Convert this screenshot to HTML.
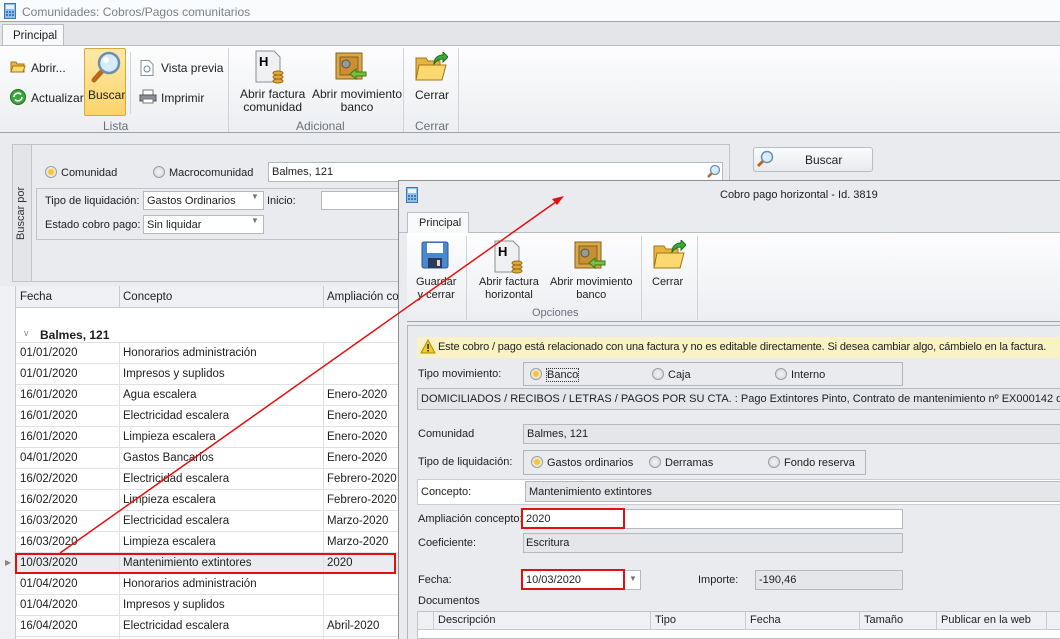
<!DOCTYPE html>
<html><head><meta charset="utf-8"><style>
*{margin:0;padding:0;box-sizing:border-box}
body{width:1060px;height:639px;overflow:hidden;background:#e9ebef;font-family:"Liberation Sans",sans-serif;font-size:11.5px;color:#1e1e1e;position:relative}
.a{position:absolute;white-space:nowrap}
.s{font-size:11px}
.box{position:absolute;border:1px solid #b4b8bf;background:#e4e6ea;white-space:nowrap;overflow:hidden;font-size:11px}
.wbox{position:absolute;border:1px solid #b4b8bf;background:#fff;white-space:nowrap;overflow:hidden;font-size:11px}
.rad{display:inline-block;width:12px;height:12px;border-radius:50%;border:1px solid #9a9ea5;background:radial-gradient(#f4f4f4,#d0d2d6);vertical-align:-2px;margin-right:4px}
.rad.on{background:radial-gradient(#f9c23c 35%,#f6e0a8 45%,#eee 70%)}
.sep{position:absolute;width:1px;background:#cfd3da}
.row{position:absolute;left:0;width:398px;height:21px;border-bottom:1px solid #dfe1e5;background:#fff}
.row span{position:absolute;top:4px}
.gl{position:absolute;top:0;bottom:0;width:1px;background:#dfe1e5}
</style></head><body>
<div class="a" style="left:0;top:0;width:1060px;height:22px;background:#fafbfc;border-bottom:1px solid #a0a4aa"></div>
<svg class="a" style="left:4px;top:3px" width="12" height="16"><rect x=".5" y=".5" width="11" height="15" fill="#8ec0ea" stroke="#3a78b8"/><rect x="2" y="2" width="8" height="4" fill="#e8f4ff"/><g fill="#3a78b8"><rect x="2" y="8" width="2" height="2"/><rect x="5" y="8" width="2" height="2"/><rect x="8" y="8" width="2" height="2"/><rect x="2" y="11" width="2" height="2"/><rect x="5" y="11" width="2" height="2"/><rect x="8" y="11" width="2" height="2"/></g></svg>
<div class="a" style="left:22px;top:5px;color:#7a7f88;font-size:12px">Comunidades: Cobros/Pagos comunitarios</div>
<div class="a" style="left:0;top:22px;width:1060px;height:23px;background:#e3e5e9"></div>
<div class="a" style="left:2px;top:24px;width:62px;height:22px;background:#f8f9fa;border:1px solid #b8bcc3;border-bottom:none;padding:5px 0 0 10px">Principal</div>
<div class="a" style="left:0;top:45px;width:1060px;height:88px;background:linear-gradient(#fdfdfe,#eceef1);border-top:1px solid #b8bcc3;border-bottom:1px solid #9ea3aa"></div>
<svg class="a" style="left:10px;top:59px" width="16" height="14"><path d="M1 3h5l1 2h7v8H1z" fill="#e8b440" stroke="#a67414"/><path d="M3 7h12l-2 6H1z" fill="#fbd870" stroke="#a67414"/></svg>
<div class="a" style="left:31px;top:61px;font-size:12px">Abrir...</div>
<svg class="a" style="left:10px;top:89px" width="16" height="16"><circle cx="8" cy="8" r="7.5" fill="#3aa83a" stroke="#1d6e1d"/><path d="M4 8a4 4 0 0 1 7-2.5M12 8a4 4 0 0 1-7 2.5" stroke="#fff" stroke-width="1.6" fill="none"/></svg>
<div class="a" style="left:31px;top:91px;font-size:12px">Actualizar</div>
<div class="a" style="left:84px;top:48px;width:42px;height:68px;background:linear-gradient(#fde9a8,#fbd46a);border:1px solid #d8a93a;border-radius:2px"></div>
<svg class="a" style="left:88px;top:50px" width="34" height="34"><line x1="6" y1="30" x2="15" y2="20" stroke="#c0661c" stroke-width="5" stroke-linecap="round"/><circle cx="21" cy="13" r="10" fill="#d6ecfa" stroke="#6c8fb0" stroke-width="2.5"/><circle cx="18" cy="10" r="3" fill="#fff"/></svg>
<div class="a" style="left:88px;top:88px;font-size:12px">Buscar</div>
<div class="sep" style="left:130px;top:52px;height:62px"></div>
<svg class="a" style="left:140px;top:60px" width="14" height="16"><path d="M1 .5h8l4 4v11H1z" fill="#fff" stroke="#8a8f96"/><circle cx="7" cy="9" r="3" fill="none" stroke="#6b86a4"/></svg>
<div class="a" style="left:161px;top:61px;font-size:12px">Vista previa</div>
<svg class="a" style="left:139px;top:89px" width="18" height="15"><rect x="4" y="1" width="10" height="5" fill="#fff" stroke="#777"/><rect x="1" y="6" width="16" height="6" fill="#8a9099" stroke="#555"/><rect x="4" y="10" width="10" height="4" fill="#fff" stroke="#777"/></svg>
<div class="a" style="left:161px;top:91px;font-size:12px">Imprimir</div>
<div class="a" style="left:103px;top:119px;color:#6b707a;font-size:12px">Lista</div>
<div class="sep" style="left:228px;top:48px;height:84px"></div>
<svg class="a" style="left:255px;top:50px" width="30" height="34"><path d="M1 1h18l6 6v25H1z" fill="#eef0f2" stroke="#8a8f96"/><text x="4" y="16" font-family="Liberation Sans" font-weight="bold" font-size="13">H</text><g fill="#e0a838" stroke="#9a6a10"><ellipse cx="23" cy="31" rx="5" ry="2"/><ellipse cx="23" cy="27" rx="5" ry="2"/><ellipse cx="23" cy="23" rx="5" ry="2"/></g></svg>
<div class="a" style="left:240px;top:88px;font-size:12px;text-align:center;line-height:13px">Abrir factura<br>comunidad</div>
<svg class="a" style="left:334px;top:50px" width="34" height="34"><rect x="2" y="3" width="26" height="26" fill="#d8a84a" stroke="#8a6018"/><rect x="6" y="7" width="18" height="18" fill="#c89030" stroke="#8a6018"/><circle cx="12" cy="14" r="4" fill="#999" stroke="#555"/><path d="M16 24l6-5v3h10v4H22v3z" fill="#78c040" stroke="#3a7a18"/></svg>
<div class="a" style="left:312px;top:88px;font-size:12px;text-align:center;line-height:13px">Abrir movimiento<br>banco</div>
<div class="a" style="left:296px;top:119px;color:#6b707a;font-size:12px">Adicional</div>
<div class="sep" style="left:403px;top:48px;height:84px"></div>
<svg class="a" style="left:414px;top:52px" width="34" height="30"><path d="M2 6h10l2 3h12v19H2z" fill="#e8b440" stroke="#a67414"/><path d="M5 13h27l-4 15H2z" fill="#fbd870" stroke="#a67414"/><path d="M20 12c0-6 4-9 9-9V0l5 5-5 5V7c-4 0-7 2-9 5z" fill="#3aaa3a" stroke="#1d6e1d"/></svg>
<div class="a" style="left:415px;top:88px;font-size:12px">Cerrar</div>
<div class="a" style="left:415px;top:119px;color:#6b707a;font-size:12px">Cerrar</div>
<div class="sep" style="left:458px;top:48px;height:84px"></div>
<!-- search panel -->
<div class="a" style="left:12px;top:144px;width:718px;height:138px;border:1px solid #c0c4ca;background:#e9ebef"></div>
<div class="a" style="left:12px;top:144px;width:20px;height:138px;border:1px solid #c0c4ca;background:#e3e5e9"></div>
<div class="a s" style="left:15px;top:240px;transform:rotate(-90deg);transform-origin:0 0;color:#333">Buscar por</div>
<div class="a s" style="left:45px;top:166px"><span class="rad on"></span>Comunidad</div>
<div class="a s" style="left:153px;top:166px"><span class="rad"></span>Macrocomunidad</div>
<div class="wbox" style="left:268px;top:162px;width:455px;height:20px;padding:3px 3px">Balmes, 121</div>
<svg class="a" style="left:706px;top:164px" width="15" height="15"><line x1="2" y1="13" x2="6" y2="9" stroke="#c0661c" stroke-width="2.5"/><circle cx="9" cy="6" r="4.5" fill="#d6ecfa" stroke="#6c8fb0" stroke-width="1.3"/></svg>
<div class="a" style="left:36px;top:188px;width:380px;height:52px;border:1px solid #c0c4ca"></div>
<div class="a s" style="left:45px;top:195px">Tipo de liquidación:</div>
<div class="wbox" style="left:143px;top:191px;width:121px;height:19px;padding:3px 3px">Gastos Ordinarios</div>
<div class="a" style="left:251px;top:192px;color:#777;font-size:8px">▼</div>
<div class="a s" style="left:267px;top:195px">Inicio:</div>
<div class="wbox" style="left:321px;top:191px;width:90px;height:19px"></div>
<div class="a s" style="left:45px;top:219px">Estado cobro pago:</div>
<div class="wbox" style="left:143px;top:215px;width:121px;height:19px;padding:3px 3px">Sin liquidar</div>
<div class="a" style="left:251px;top:216px;color:#777;font-size:8px">▼</div>
<div class="a" style="left:753px;top:147px;width:120px;height:25px;border:1px solid #b8bcc3;border-radius:3px;background:linear-gradient(#fafbfc,#e8eaed)"></div>
<svg class="a" style="left:756px;top:150px" width="18" height="18"><line x1="2" y1="16" x2="7" y2="11" stroke="#c0661c" stroke-width="3"/><circle cx="11" cy="7" r="5.5" fill="#d6ecfa" stroke="#6c8fb0" stroke-width="1.5"/></svg>
<div class="a" style="left:805px;top:153px;font-size:12px">Buscar</div>
<!-- grid -->
<div class="a" style="left:0;top:286px;width:400px;height:353px;background:#fff;border-top:1px solid #c0c4ca"></div>
<div class="a" style="left:0;top:286px;width:400px;height:22px;background:#eef0f3;border-bottom:1px solid #c8ccd2"></div>
<div class="a" style="left:0;top:286px;width:16px;height:353px;background:#eef0f3;border-right:1px solid #c8ccd2"></div>
<div class="a" style="left:20px;top:291px">Fecha</div>
<div class="a" style="left:123px;top:291px">Concepto</div>
<div class="a" style="left:327px;top:291px">Ampliación con</div>
<div class="a" style="left:119px;top:286px;width:1px;height:22px;background:#c8ccd2"></div>
<div class="a" style="left:323px;top:286px;width:1px;height:22px;background:#c8ccd2"></div>
<div class="a" style="left:16px;top:308px;width:384px;height:35px;background:#fff;border-bottom:1px solid #dfe1e5"></div>
<div class="a" style="left:24px;top:328px;color:#888;font-size:9px">v</div>
<div class="a" style="left:40px;top:328px;font-weight:bold;font-size:12px">Balmes, 121</div>
<div class="a" style="left:16px;top:343px;width:384px;height:296px">
<div class="row" style="top:0"><span style="left:4px">01/01/2020</span><span style="left:107px">Honorarios administración</span></div>
<div class="row" style="top:21px"><span style="left:4px">01/01/2020</span><span style="left:107px">Impresos y suplidos</span></div>
<div class="row" style="top:42px"><span style="left:4px">16/01/2020</span><span style="left:107px">Agua escalera</span><span style="left:311px">Enero-2020</span></div>
<div class="row" style="top:63px"><span style="left:4px">16/01/2020</span><span style="left:107px">Electricidad escalera</span><span style="left:311px">Enero-2020</span></div>
<div class="row" style="top:84px"><span style="left:4px">16/01/2020</span><span style="left:107px">Limpieza escalera</span><span style="left:311px">Enero-2020</span></div>
<div class="row" style="top:105px"><span style="left:4px">04/01/2020</span><span style="left:107px">Gastos Bancarios</span><span style="left:311px">Enero-2020</span></div>
<div class="row" style="top:126px"><span style="left:4px">16/02/2020</span><span style="left:107px">Electricidad escalera</span><span style="left:311px">Febrero-2020</span></div>
<div class="row" style="top:147px"><span style="left:4px">16/02/2020</span><span style="left:107px">Limpieza escalera</span><span style="left:311px">Febrero-2020</span></div>
<div class="row" style="top:168px"><span style="left:4px">16/03/2020</span><span style="left:107px">Electricidad escalera</span><span style="left:311px">Marzo-2020</span></div>
<div class="row" style="top:189px"><span style="left:4px">16/03/2020</span><span style="left:107px">Limpieza escalera</span><span style="left:311px">Marzo-2020</span></div>
<div class="row" style="top:210px;background:#ebecef"><span style="left:4px">10/03/2020</span><span style="left:107px">Mantenimiento extintores</span><span style="left:311px">2020</span></div>
<div class="row" style="top:231px"><span style="left:4px">01/04/2020</span><span style="left:107px">Honorarios administración</span></div>
<div class="row" style="top:252px"><span style="left:4px">01/04/2020</span><span style="left:107px">Impresos y suplidos</span></div>
<div class="row" style="top:273px"><span style="left:4px">16/04/2020</span><span style="left:107px">Electricidad escalera</span><span style="left:311px">Abril-2020</span></div>
<div class="gl" style="left:103px"></div><div class="gl" style="left:307px"></div>
</div>
<div class="a" style="left:5px;top:558px;color:#888;font-size:8px">▶</div>
<div class="a" style="left:15px;top:553px;width:381px;height:21px;border:2px solid #e41010"></div>
<div class="a" style="left:398px;top:286px;width:1px;height:353px;background:#c0c4ca"></div>
<!-- dialog -->
<div class="a" style="left:398px;top:180px;width:662px;height:459px;background:#e9ebef;border:1px solid #8a8f96;border-right:none;border-bottom:none"></div>
<svg class="a" style="left:406px;top:187px" width="12" height="16"><rect x=".5" y=".5" width="11" height="15" fill="#8ec0ea" stroke="#3a78b8"/><rect x="2" y="2" width="8" height="4" fill="#e8f4ff"/><g fill="#3a78b8"><rect x="2" y="8" width="2" height="2"/><rect x="5" y="8" width="2" height="2"/><rect x="8" y="8" width="2" height="2"/><rect x="2" y="11" width="2" height="2"/><rect x="5" y="11" width="2" height="2"/><rect x="8" y="11" width="2" height="2"/></g></svg>
<div class="a s" style="left:720px;top:189px">Cobro pago horizontal - Id. 3819</div>
<div class="a" style="left:399px;top:232px;width:661px;height:1px;background:#b8bcc3"></div>
<div class="a s" style="left:407px;top:212px;width:62px;height:21px;background:#f8f9fa;border:1px solid #b8bcc3;border-bottom:none;padding:4px 0 0 11px">Principal</div>
<div class="a" style="left:407px;top:233px;width:653px;height:89px;background:linear-gradient(#fdfdfe,#eceef1);border-bottom:1px solid #9ea3aa"></div>
<svg class="a" style="left:421px;top:241px" width="28" height="28"><rect x="1" y="1" width="26" height="26" rx="2" fill="#4a88d0" stroke="#2a5a98"/><rect x="6" y="2" width="16" height="10" fill="#fff"/><rect x="7" y="17" width="14" height="10" fill="#2a3a58"/><rect x="16" y="19" width="3" height="6" fill="#ddd"/></svg>
<div class="a s" style="left:416px;top:276px;text-align:center;line-height:13px">Guardar<br>y cerrar</div>
<div class="sep" style="left:466px;top:236px;height:84px"></div>
<svg class="a" style="left:494px;top:240px" width="30" height="34"><path d="M1 1h18l6 6v25H1z" fill="#eef0f2" stroke="#8a8f96"/><text x="4" y="16" font-family="Liberation Sans" font-weight="bold" font-size="13">H</text><g fill="#e0a838" stroke="#9a6a10"><ellipse cx="23" cy="31" rx="5" ry="2"/><ellipse cx="23" cy="27" rx="5" ry="2"/><ellipse cx="23" cy="23" rx="5" ry="2"/></g></svg>
<div class="a s" style="left:479px;top:276px;text-align:center;line-height:13px">Abrir factura<br>horizontal</div>
<svg class="a" style="left:573px;top:239px" width="34" height="34"><rect x="2" y="3" width="26" height="26" fill="#d8a84a" stroke="#8a6018"/><rect x="6" y="7" width="18" height="18" fill="#c89030" stroke="#8a6018"/><circle cx="12" cy="14" r="4" fill="#999" stroke="#555"/><path d="M16 24l6-5v3h10v4H22v3z" fill="#78c040" stroke="#3a7a18"/></svg>
<div class="a s" style="left:550px;top:276px;text-align:center;line-height:13px">Abrir movimiento<br>banco</div>
<div class="a s" style="left:532px;top:307px;color:#6b707a">Opciones</div>
<div class="sep" style="left:641px;top:236px;height:84px"></div>
<svg class="a" style="left:652px;top:240px" width="34" height="30"><path d="M2 6h10l2 3h12v19H2z" fill="#e8b440" stroke="#a67414"/><path d="M5 13h27l-4 15H2z" fill="#fbd870" stroke="#a67414"/><path d="M20 12c0-6 4-9 9-9V0l5 5-5 5V7c-4 0-7 2-9 5z" fill="#3aaa3a" stroke="#1d6e1d"/></svg>
<div class="a s" style="left:652px;top:276px">Cerrar</div>
<div class="sep" style="left:697px;top:236px;height:84px"></div>
<div class="a" style="left:407px;top:325px;width:653px;height:314px;border-left:1px solid #b0b4bb;border-top:1px solid #b0b4bb"></div>
<div class="a" style="left:417px;top:337px;width:643px;height:21px;background:#f8f2c4"></div>
<svg class="a" style="left:420px;top:339px" width="16" height="15"><path d="M8 1L15 14H1z" fill="#f5cc1a" stroke="#a88a10"/><rect x="7.3" y="5" width="1.5" height="5" fill="#222"/><rect x="7.3" y="11" width="1.5" height="1.5" fill="#222"/></svg>
<div class="a s" style="left:438px;top:341px;letter-spacing:-0.15px">Este cobro / pago está relacionado con una factura y no es editable directamente. Si desea cambiar algo, cámbielo en la factura.</div>
<div class="a s" style="left:418px;top:368px">Tipo movimiento:</div>
<div class="a" style="left:523px;top:362px;width:380px;height:24px;border:1px solid #b0b4bb"></div>
<div class="a s" style="left:530px;top:368px"><span class="rad on"></span><span style="border:1px dotted #333">Banco</span></div>
<div class="a s" style="left:652px;top:368px"><span class="rad"></span>Caja</div>
<div class="a s" style="left:775px;top:368px"><span class="rad"></span>Interno</div>
<div class="box" style="left:417px;top:388px;width:660px;height:22px;padding:4px 3px">DOMICILIADOS / RECIBOS / LETRAS / PAGOS POR SU CTA. : Pago Extintores Pinto, Contrato de mantenimiento nº EX000142 de la C</div>
<div class="a s" style="left:418px;top:428px">Comunidad</div>
<div class="box" style="left:523px;top:424px;width:560px;height:20px;padding:3px 3px">Balmes, 121</div>
<div class="a s" style="left:418px;top:456px">Tipo de liquidación:</div>
<div class="a" style="left:523px;top:450px;width:343px;height:25px;border:1px solid #b0b4bb"></div>
<div class="a s" style="left:531px;top:456px"><span class="rad on"></span>Gastos ordinarios</div>
<div class="a s" style="left:649px;top:456px"><span class="rad"></span>Derramas</div>
<div class="a s" style="left:768px;top:456px"><span class="rad"></span>Fondo reserva</div>
<div class="a" style="left:417px;top:479px;width:660px;height:26px;background:#fff;border:1px solid #c8ccd2"></div>
<div class="a s" style="left:421px;top:486px">Concepto:</div>
<div class="box" style="left:525px;top:481px;width:560px;height:21px;padding:4px 3px">Mantenimiento extintores</div>
<div class="a s" style="left:418px;top:513px">Ampliación concepto:</div>
<div class="wbox" style="left:521px;top:509px;width:382px;height:20px"></div>
<div class="a s" style="left:521px;top:508px;width:104px;height:21px;border:2px solid #e41010;padding:3px 3px">2020</div>
<div class="a s" style="left:418px;top:537px">Coeficiente:</div>
<div class="box" style="left:523px;top:533px;width:380px;height:20px;padding:3px 2px">Escritura</div>
<div class="a s" style="left:418px;top:574px">Fecha:</div>
<div class="wbox" style="left:521px;top:570px;width:120px;height:20px"></div>
<div class="a s" style="left:521px;top:569px;width:104px;height:21px;border:2px solid #e41010;padding:3px 3px">10/03/2020</div>
<div class="a" style="left:629px;top:574px;color:#777;font-size:8px">▼</div>
<div class="a s" style="left:698px;top:574px">Importe:</div>
<div class="box" style="left:755px;top:570px;width:148px;height:20px;padding:3px 3px">-190,46</div>
<div class="a s" style="left:418px;top:595px">Documentos</div>
<div class="a" style="left:417px;top:611px;width:660px;height:28px;background:#fff;border:1px solid #c0c4ca"></div>
<div class="a" style="left:418px;top:612px;width:660px;height:18px;background:#eef0f3;border-bottom:1px solid #c8ccd2"></div>
<div class="a" style="left:433px;top:612px;width:1px;height:18px;background:#c8ccd2"></div>
<div class="a" style="left:650px;top:612px;width:1px;height:18px;background:#c8ccd2"></div>
<div class="a" style="left:745px;top:612px;width:1px;height:18px;background:#c8ccd2"></div>
<div class="a" style="left:859px;top:612px;width:1px;height:18px;background:#c8ccd2"></div>
<div class="a" style="left:936px;top:612px;width:1px;height:18px;background:#c8ccd2"></div>
<div class="a" style="left:1046px;top:612px;width:1px;height:18px;background:#c8ccd2"></div>
<div class="a s" style="left:438px;top:614px">Descripción</div>
<div class="a s" style="left:655px;top:614px">Tipo</div>
<div class="a s" style="left:750px;top:614px">Fecha</div>
<div class="a s" style="left:864px;top:614px">Tamaño</div>
<div class="a s" style="left:941px;top:614px">Publicar en la web</div>
<svg class="a" style="left:0;top:0" width="1060" height="639"><line x1="60" y1="553" x2="560" y2="199" stroke="#e41010" stroke-width="1.5"/><path d="M564 196l-12 3 5 6z" fill="#e41010"/></svg>
</body></html>
